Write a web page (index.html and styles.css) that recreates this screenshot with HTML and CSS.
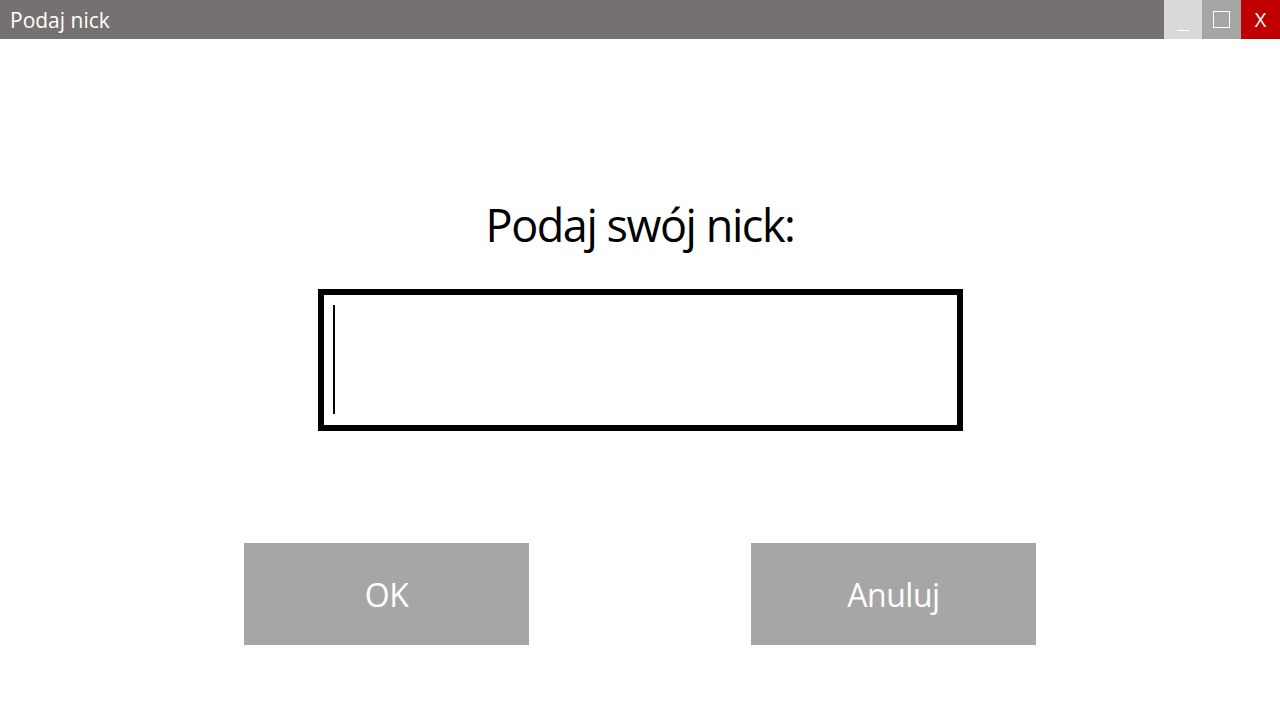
FILE: index.html
```html
<!DOCTYPE html>
<html lang="pl">
<head>
<meta charset="utf-8">
<title>Podaj nick</title>
<link rel="stylesheet" href="styles.css">
</head>
<body>
<div class="window">
  <header class="titlebar">
    <span class="title">Podaj nick</span>
    <div class="controls">
      <button class="ctl min"><span class="min-line"></span></button>
      <button class="ctl max"><span class="max-box"></span></button>
      <button class="ctl close">X</button>
    </div>
  </header>
  <main class="content">
    <h1 class="prompt">Podaj swój nick:</h1>
    <div class="field"><span class="caret"></span></div>
    <div class="actions">
      <button class="btn">OK</button>
      <button class="btn">Anuluj</button>
    </div>
  </main>
</div>
</body>
</html>
```
FILE: styles.css
```css
* { box-sizing: border-box; }
html, body { margin: 0; padding: 0; }
body {
  width: 1280px;
  height: 720px;
  background: #ffffff;
  font-family: "Open Sans", "Noto Sans", sans-serif;
  overflow: hidden;
}
.window { display: flex; flex-direction: column; height: 720px; }
.titlebar {
  height: 39px;
  background: #767171;
  display: flex;
  align-items: center;
  justify-content: space-between;
}
.title {
  color: #ffffff;
  font-size: 21px;
  padding-left: 10px;
}
.controls { display: flex; height: 39px; }
.ctl {
  border: 0;
  margin: 0;
  padding: 0;
  height: 39px;
  display: flex;
  align-items: center;
  justify-content: center;
  font-family: inherit;
}
.min { width: 38px; background: #d9d9d9; }
.min-line { width: 12px; height: 1px; background: #ffffff; margin-top: 21px; }
.max { width: 39px; background: #a6a6a6; }
.max-box { width: 17px; height: 17px; border: 1px solid #ffffff; }
.close { width: 39px; background: #c00000; color: #ffffff; font-size: 20px; }
.content {
  flex: 1;
  display: flex;
  flex-direction: column;
  align-items: center;
}
.prompt {
  margin: 163px 0 0 0;
  font-weight: 400;
  font-size: 45px;
  line-height: 1;
  color: #000000;
  letter-spacing: -1.45px;
  height: 87px;
}
.field {
  width: 645px;
  height: 142px;
  border: 6px solid #000000;
  padding: 10px 0 0 9px;
}
.caret { display: block; width: 2px; height: 109px; background: #000000; }
.actions {
  margin-top: 112px;
  display: flex;
  gap: 222px;
}
.btn {
  width: 285px;
  height: 102px;
  background: #a6a6a6;
  border: 0;
  color: #ffffff;
  font-family: inherit;
  font-size: 32px;
  letter-spacing: -0.5px;
  padding: 0;
}
```
